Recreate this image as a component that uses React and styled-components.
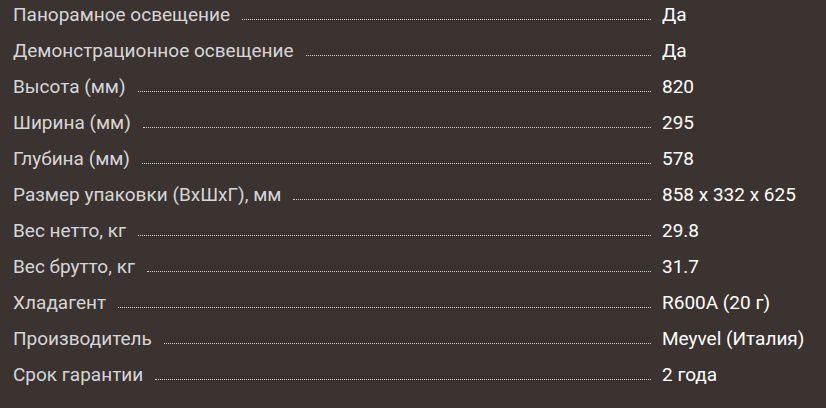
import React from "react";
import styled, { createGlobalStyle } from "styled-components";

const Global = createGlobalStyle`
  html, body { margin: 0; padding: 0; background: #3a3330; }
  body { font-family: Roboto, "Liberation Sans", sans-serif; }
`;

const List = styled.div`
  display: flex;
  flex-direction: column;
  padding: 0 0 0 13px;
  margin-top: -3px;
`;

const Row = styled.div`
  display: flex;
  align-items: baseline;
  height: 36px;
  line-height: 36px;
  font-size: 19px;
`;

const Label = styled.span`
  color: #d6d6d6;
  white-space: nowrap;
`;

const Dots = styled.span`
  flex: 1;
  margin: 0 11px 0 12px;
  border-bottom: 1px dotted #d0d0d0;
  transform: translateY(-1px);
`;

const Value = styled.span`
  width: 164px;
  color: #ffffff;
  white-space: nowrap;
`;

const data = [
  ["Панорамное освещение", "Да"],
  ["Демонстрационное освещение", "Да"],
  ["Высота (мм)", "820"],
  ["Ширина (мм)", "295"],
  ["Глубина (мм)", "578"],
  ["Размер упаковки (ВхШхГ), мм", "858 x 332 x 625"],
  ["Вес нетто, кг", "29.8"],
  ["Вес брутто, кг", "31.7"],
  ["Хладагент", "R600A (20 г)"],
  ["Производитель", "Meyvel (Италия)"],
  ["Срок гарантии", "2 года"],
];

export default function App() {
  return (
    <>
      <Global />
      <List>
        {data.map(([l, v]) => (
          <Row key={l}>
            <Label>{l}</Label>
            <Dots />
            <Value>{v}</Value>
          </Row>
        ))}
      </List>
    </>
  );
}
